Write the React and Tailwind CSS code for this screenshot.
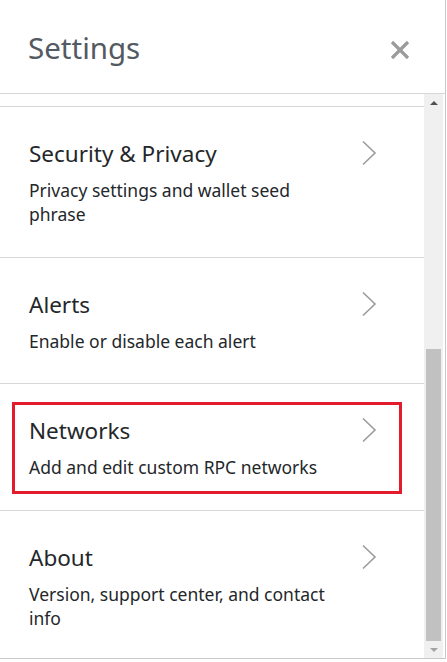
import React from "react";

const items = [
  { title: "Security & Privacy", desc: "Privacy settings and wallet seed phrase" },
  { title: "Alerts", desc: "Enable or disable each alert" },
  { title: "Networks", desc: "Add and edit custom RPC networks", marked: true },
  { title: "About", desc: "Version, support center, and contact info" },
];

const Chevron = () => (
  <svg width="16" height="26" viewBox="0 0 16 26" className="shrink-0 mt-[1px]">
    <path d="M2 1.5 L14 13 L2 24.5" fill="none" stroke="#9b9b9b" strokeWidth="1.6" />
  </svg>
);

const SettingsRow = ({ title, desc, marked }) => (
  <div className="relative flex items-start justify-between border-b border-[#d6d9dc] pl-[29px] pr-[47px] pt-8 pb-[30.5px]">
    <div className="max-w-[315px]">
      <div className="text-[22.5px] leading-[30px] text-[#24272a]">{title}</div>
      <div className="mt-[9px] text-[17.5px] leading-[24px] text-[#24272a]">{desc}</div>
    </div>
    <Chevron />
    {/* red highlight box */}
    {marked && (
      <div className="absolute left-[12px] top-[18px] w-[390px] h-[92px] border-[3px] border-[#e21c2c]" />
    )}
  </div>
);

export default function App() {
  return (
    <div
      className="w-[446px] h-[659px] bg-white border-r border-b border-[#c8c8c8] flex flex-col overflow-hidden"
      style={{ fontFamily: '"Noto Sans", sans-serif' }}
    >
      {/* Header */}
      <div className="h-[94px] shrink-0 flex items-center justify-between pl-[28px] pr-[35px] border-b border-[#d6d9dc]">
        <span className="text-[29.5px] text-[#535a61] leading-none mt-[2px]">Settings</span>
        <svg width="20" height="20" viewBox="0 0 20 20" className="mt-[6px]">
          <path d="M2 2 L18 18 M18 2 L2 18" stroke="#9b9b9b" strokeWidth="3.2" />
        </svg>
      </div>

      <div className="flex flex-1 min-h-0">
        {/* List */}
        <div className="flex-1 flex flex-col overflow-hidden">
          <div className="h-[13px] shrink-0 border-b border-[#d6d9dc]" />
          {items.map((it) => (
            <SettingsRow key={it.title} {...it} />
          ))}
        </div>

        {/* Scrollbar */}
        <div className="w-[19px] shrink-0 bg-[#f0f0f0] flex flex-col items-center mr-[2px]">
          <div className="h-[17px] flex items-center justify-center">
            <div className="w-0 h-0 border-l-[4px] border-r-[4px] border-b-[4px] border-l-transparent border-r-transparent border-b-[#505050]" />
          </div>
          <div className="flex-1 w-full flex flex-col px-[2px]">
            <div className="h-[238px]" />
            <div className="flex-1 bg-[#c1c1c1]" />
          </div>
          <div className="h-[17px] flex items-center justify-center">
            <div className="w-0 h-0 border-l-[4px] border-r-[4px] border-t-[4px] border-l-transparent border-r-transparent border-t-[#a3a3a3]" />
          </div>
        </div>
      </div>
    </div>
  );
}
